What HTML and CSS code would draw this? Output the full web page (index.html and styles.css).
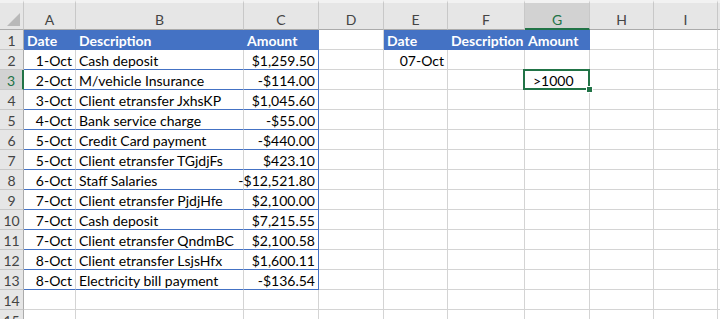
FILE: index.html
```html
<!DOCTYPE html>
<html>
<head>
<meta charset="utf-8">
<link rel="stylesheet" href="styles.css">
</head>
<body>
<div class="sheet">
  <div class="ch corner"><span class="tri"></span></div>
  <div class="ch">A</div><div class="ch">B</div><div class="ch">C</div><div class="ch">D</div><div class="ch">E</div><div class="ch">F</div><div class="ch selh">G</div><div class="ch">H</div><div class="ch">I</div><div class="ch"></div>

  <div class="rh">1</div>
  <div class="c th">Date</div><div class="c th">Description</div><div class="c th tr">Amount</div><div class="c"></div>
  <div class="c th">Date</div><div class="c th">Description</div><div class="c th">Amount</div><div class="c"></div><div class="c"></div><div class="c"></div>

  <div class="rh">2</div>
  <div class="c t r">1-Oct</div><div class="c t">Cash deposit</div><div class="c t tr r">$1,259.50</div><div class="c"></div>
  <div class="c r">07-Oct</div><div class="c"></div><div class="c"></div><div class="c"></div><div class="c"></div><div class="c"></div>

  <div class="rh selr">3</div>
  <div class="c t r">2-Oct</div><div class="c t">M/vehicle Insurance</div><div class="c t tr r">-$114.00</div><div class="c"></div>
  <div class="c"></div><div class="c"></div><div class="c sel">&gt;1000<span class="handle"></span></div><div class="c"></div><div class="c"></div><div class="c"></div>

  <div class="rh">4</div>
  <div class="c t r">3-Oct</div><div class="c t">Client etransfer JxhsKP</div><div class="c t tr r">$1,045.60</div><div class="c"></div>
  <div class="c"></div><div class="c"></div><div class="c"></div><div class="c"></div><div class="c"></div><div class="c"></div>

  <div class="rh">5</div>
  <div class="c t r">4-Oct</div><div class="c t">Bank service charge</div><div class="c t tr r">-$55.00</div><div class="c"></div>
  <div class="c"></div><div class="c"></div><div class="c"></div><div class="c"></div><div class="c"></div><div class="c"></div>

  <div class="rh">6</div>
  <div class="c t r">5-Oct</div><div class="c t">Credit Card payment</div><div class="c t tr r">-$440.00</div><div class="c"></div>
  <div class="c"></div><div class="c"></div><div class="c"></div><div class="c"></div><div class="c"></div><div class="c"></div>

  <div class="rh">7</div>
  <div class="c t r">5-Oct</div><div class="c t">Client etransfer TGjdjFs</div><div class="c t tr r">$423.10</div><div class="c"></div>
  <div class="c"></div><div class="c"></div><div class="c"></div><div class="c"></div><div class="c"></div><div class="c"></div>

  <div class="rh">8</div>
  <div class="c t r">6-Oct</div><div class="c t">Staff Salaries</div><div class="c t tr r">-$12,521.80</div><div class="c"></div>
  <div class="c"></div><div class="c"></div><div class="c"></div><div class="c"></div><div class="c"></div><div class="c"></div>

  <div class="rh">9</div>
  <div class="c t r">7-Oct</div><div class="c t">Client etransfer PjdjHfe</div><div class="c t tr r">$2,100.00</div><div class="c"></div>
  <div class="c"></div><div class="c"></div><div class="c"></div><div class="c"></div><div class="c"></div><div class="c"></div>

  <div class="rh">10</div>
  <div class="c t r">7-Oct</div><div class="c t">Cash deposit</div><div class="c t tr r">$7,215.55</div><div class="c"></div>
  <div class="c"></div><div class="c"></div><div class="c"></div><div class="c"></div><div class="c"></div><div class="c"></div>

  <div class="rh">11</div>
  <div class="c t r">7-Oct</div><div class="c t">Client etransfer QndmBC</div><div class="c t tr r">$2,100.58</div><div class="c"></div>
  <div class="c"></div><div class="c"></div><div class="c"></div><div class="c"></div><div class="c"></div><div class="c"></div>

  <div class="rh">12</div>
  <div class="c t r">8-Oct</div><div class="c t">Client etransfer LsjsHfx</div><div class="c t tr r">$1,600.11</div><div class="c"></div>
  <div class="c"></div><div class="c"></div><div class="c"></div><div class="c"></div><div class="c"></div><div class="c"></div>

  <div class="rh">13</div>
  <div class="c t r">8-Oct</div><div class="c t">Electricity bill payment</div><div class="c t tr r">-$136.54</div><div class="c"></div>
  <div class="c"></div><div class="c"></div><div class="c"></div><div class="c"></div><div class="c"></div><div class="c"></div>

  <div class="rh">14</div>
  <div class="c"></div><div class="c"></div><div class="c"></div><div class="c"></div>
  <div class="c"></div><div class="c"></div><div class="c"></div><div class="c"></div><div class="c"></div><div class="c"></div>

  <div class="rh">15</div>
  <div class="c"></div><div class="c"></div><div class="c"></div><div class="c"></div>
  <div class="c"></div><div class="c"></div><div class="c"></div><div class="c"></div><div class="c"></div><div class="c"></div>
</div>
</body>
</html>
```
FILE: styles.css
```css
html, body {
  margin: 0;
  padding: 0;
  background: #ffffff;
  overflow: hidden;
}
body {
  font-family: Lato, "Open Sans", sans-serif;
  font-size: 14px;
  color: #000;
}
.sheet {
  display: grid;
  grid-template-columns: 24px 52px 168px 75px 65px 64px 77px 65px 64px 64px 1fr;
  grid-template-rows: 30px;
  grid-auto-rows: 20px;
  width: 720px;
}
.sheet > div {
  box-sizing: border-box;
  white-space: nowrap;
  overflow: visible;
}
.ch {
  background: #e6e6e6;
  border-top: 3px solid #f2f2f2;
  border-right: 1px solid #c8c8c8;
  border-bottom: 1px solid #ababab;
  color: #444;
  display: flex;
  align-items: flex-end;
  justify-content: center;
  padding-bottom: 1px;
  line-height: 17px;
}
.corner {
  position: relative;
}
.tri {
  position: absolute;
  right: 3px;
  bottom: 3px;
  width: 0;
  height: 0;
  border-left: 13px solid transparent;
  border-bottom: 13px solid #b9b9b9;
}
.selh {
  background: #d2d2d2;
  color: #217346;
  border-bottom: 2px solid #217346;
  padding-bottom: 0;
}
.rh {
  background: #e6e6e6;
  border-right: 1px solid #ababab;
  border-bottom: 1px solid #c8c8c8;
  color: #444;
  display: flex;
  align-items: flex-end;
  justify-content: center;
  line-height: 17px;
  padding-bottom: 0;
}
.selr {
  background: #d2d2d2;
  color: #217346;
  border-right: 2px solid #217346;
}
.c {
  border-right: 1px solid #d4d4d4;
  border-bottom: 1px solid #d4d4d4;
  display: flex;
  align-items: flex-end;
  padding: 0 3px 0 3px;
  line-height: 17px;
}
.r {
  justify-content: flex-end;
}
.t {
  border-bottom-color: #4472c4;
}
.tr {
  border-right-color: #4472c4;
}
.th {
  background: #4472c4;
  border-right-color: #4472c4;
  border-bottom-color: #4472c4;
  color: #ffffff;
  font-weight: bold;
}
.sel {
  position: relative;
  padding-left: 8px;
}
.sel::before {
  content: "";
  position: absolute;
  top: -1px;
  left: -2px;
  right: -1px;
  bottom: -1px;
  border: 2px solid #217346;
}
.handle {
  position: absolute;
  right: -4px;
  bottom: -4px;
  width: 5px;
  height: 5px;
  background: #217346;
  border: 1px solid #ffffff;
}
```
